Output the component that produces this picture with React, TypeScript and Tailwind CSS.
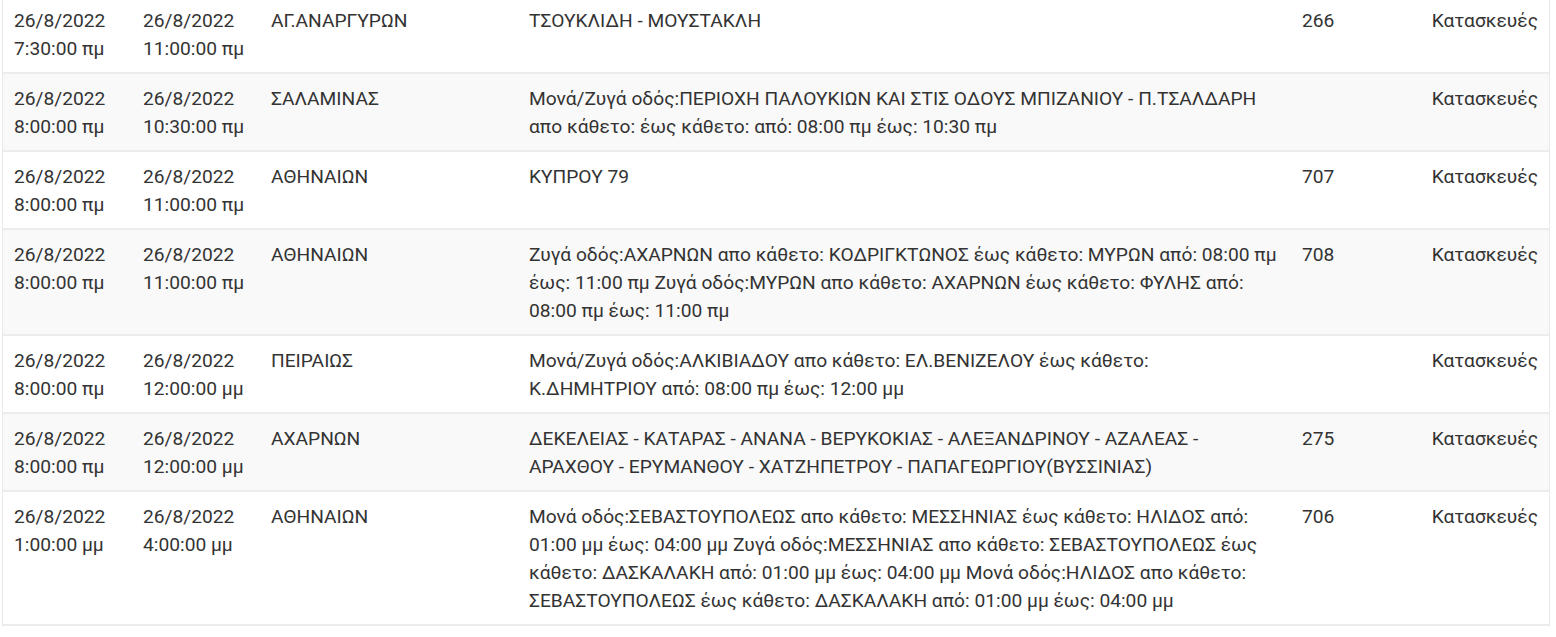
import React from "react";

type Row = { a: string[]; b: string[]; c: string; d: string; e: string; f: string };

const rows: Row[] = [
  { a: ["26/8/2022", "7:30:00 πμ"], b: ["26/8/2022", "11:00:00 πμ"], c: "ΑΓ.ΑΝΑΡΓΥΡΩΝ", d: "ΤΣΟΥΚΛΙΔΗ - ΜΟΥΣΤΑΚΛΗ", e: "266", f: "Κατασκευές" },
  { a: ["26/8/2022", "8:00:00 πμ"], b: ["26/8/2022", "10:30:00 πμ"], c: "ΣΑΛΑΜΙΝΑΣ", d: "Μονά/Ζυγά οδός:ΠΕΡΙΟΧΗ ΠΑΛΟΥΚΙΩΝ ΚΑΙ ΣΤΙΣ ΟΔΟΥΣ ΜΠΙΖΑΝΙΟΥ - Π.ΤΣΑΛΔΑΡΗ απο κάθετο: έως κάθετο: από: 08:00 πμ έως: 10:30 πμ", e: "", f: "Κατασκευές" },
  { a: ["26/8/2022", "8:00:00 πμ"], b: ["26/8/2022", "11:00:00 πμ"], c: "ΑΘΗΝΑΙΩΝ", d: "ΚΥΠΡΟΥ 79", e: "707", f: "Κατασκευές" },
  { a: ["26/8/2022", "8:00:00 πμ"], b: ["26/8/2022", "11:00:00 πμ"], c: "ΑΘΗΝΑΙΩΝ", d: "Ζυγά οδός:ΑΧΑΡΝΩΝ απο κάθετο: ΚΟΔΡΙΓΚΤΩΝΟΣ έως κάθετο: ΜΥΡΩΝ από: 08:00 πμ έως: 11:00 πμ Ζυγά οδός:ΜΥΡΩΝ απο κάθετο: ΑΧΑΡΝΩΝ έως κάθετο: ΦΥΛΗΣ από: 08:00 πμ έως: 11:00 πμ", e: "708", f: "Κατασκευές" },
  { a: ["26/8/2022", "8:00:00 πμ"], b: ["26/8/2022", "12:00:00 μμ"], c: "ΠΕΙΡΑΙΩΣ", d: "Μονά/Ζυγά οδός:ΑΛΚΙΒΙΑΔΟΥ απο κάθετο: ΕΛ.ΒΕΝΙΖΕΛΟΥ έως κάθετο: Κ.ΔΗΜΗΤΡΙΟΥ από: 08:00 πμ έως: 12:00 μμ", e: "", f: "Κατασκευές" },
  { a: ["26/8/2022", "8:00:00 πμ"], b: ["26/8/2022", "12:00:00 μμ"], c: "ΑΧΑΡΝΩΝ", d: "ΔΕΚΕΛΕΙΑΣ - ΚΑΤΑΡΑΣ - ΑΝΑΝΑ - ΒΕΡΥΚΟΚΙΑΣ - ΑΛΕΞΑΝΔΡΙΝΟΥ - ΑΖΑΛΕΑΣ - ΑΡΑΧΘΟΥ - ΕΡΥΜΑΝΘΟΥ - ΧΑΤΖΗΠΕΤΡΟΥ - ΠΑΠΑΓΕΩΡΓΙΟΥ(ΒΥΣΣΙΝΙΑΣ)", e: "275", f: "Κατασκευές" },
  { a: ["26/8/2022", "1:00:00 μμ"], b: ["26/8/2022", "4:00:00 μμ"], c: "ΑΘΗΝΑΙΩΝ", d: "Μονά οδός:ΣΕΒΑΣΤΟΥΠΟΛΕΩΣ απο κάθετο: ΜΕΣΣΗΝΙΑΣ έως κάθετο: ΗΛΙΔΟΣ από: 01:00 μμ έως: 04:00 μμ Ζυγά οδός:ΜΕΣΣΗΝΙΑΣ απο κάθετο: ΣΕΒΑΣΤΟΥΠΟΛΕΩΣ έως κάθετο: ΔΑΣΚΑΛΑΚΗ από: 01:00 μμ έως: 04:00 μμ Μονά οδός:ΗΛΙΔΟΣ απο κάθετο: ΣΕΒΑΣΤΟΥΠΟΛΕΩΣ έως κάθετο: ΔΑΣΚΑΛΑΚΗ από: 01:00 μμ έως: 04:00 μμ", e: "706", f: "Κατασκευές" },
];

export default function App() {
  return (
    <div className="w-[1556px] h-[637px] overflow-hidden bg-white" style={{ fontFamily: "Roboto, 'Noto Sans', sans-serif" }}>
      <div className="ml-[2px] mr-[6px] -mt-[4px] border-x border-[#e9e9e9] text-[19.2px] leading-[28px] text-[#333333]">
        {rows.map((r, i) => (
          <div
            key={i}
            className={`grid grid-cols-[129px_128px_258px_773px_128px_1fr] border-b-2 border-[#ececec] pt-[11px] pb-[9px] ${i % 2 === 1 ? "bg-[#f9f9f9]" : "bg-white"}`}
          >
            <div className="pl-[11px]">
              <div>{r.a[0]}</div>
              <div>{r.a[1]}</div>
            </div>
            <div className="pl-[11px]">
              <div>{r.b[0]}</div>
              <div>{r.b[1]}</div>
            </div>
            <div className="pl-[11px]">{r.c}</div>
            <div className="px-[11px]">{r.d}</div>
            <div className="pl-[11px]">{r.e}</div>
            <div className="pr-[11px] text-right">{r.f}</div>
          </div>
        ))}
      </div>
    </div>
  );
}
